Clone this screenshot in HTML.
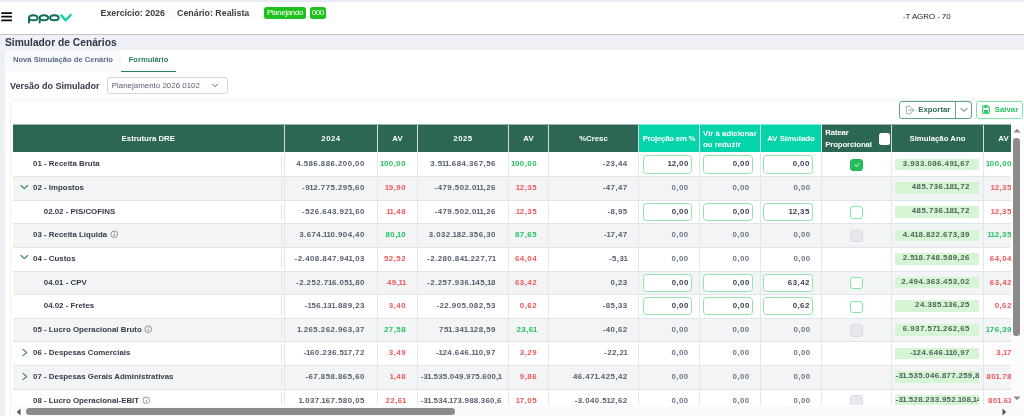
<!DOCTYPE html>
<html><head><meta charset="utf-8"><title>Simulador de Cenários</title>
<style>
*{box-sizing:border-box;margin:0;padding:0}
html,body{width:1024px;height:416px;overflow:hidden;background:#fff;font-family:"Liberation Sans",sans-serif;}
body{position:relative}
.abs{position:absolute}
#topstrip{left:0;top:0;width:1024px;height:2px;background:#ececf6}
#hdr{left:0;top:2px;width:1024px;height:33px;background:#fff;border-bottom:1px solid #c4c4c4;box-shadow:0 1px 2px rgba(0,0,0,.18)}
#band{left:0;top:35px;width:1024px;height:15px;background:#eef0f5}
#lstrip{left:0;top:34.5px;width:5px;height:382px;background:#eef0f5}
#burger div{position:absolute;left:1.2px;width:10.8px;height:1.7px;background:#0a0a0a;border-radius:.6px}
.ht{font-weight:bold;font-size:8.85px;color:#3d3d3d;white-space:nowrap;line-height:12px}
.badge{background:#1ec11e;color:#fff;border-radius:2.5px;font-size:7.9px;line-height:12px;height:12px;text-align:center;white-space:nowrap;letter-spacing:-.35px}
#title{left:5px;top:36px;font-weight:bold;font-size:10.25px;line-height:13px;color:#2f3747;white-space:nowrap}
#tab1{left:5px;top:50px;width:116px;height:21px;background:#f8f9fb;color:#5c6b8a;}
#tab2{left:121px;top:50px;width:55px;height:21.5px;background:#fff;color:#2f7d5c;border-bottom:1px solid #2f7d5c}
.tab{font-weight:bold;font-size:7.6px;line-height:20px;text-align:center;white-space:nowrap}
#vlabel{left:10px;top:79.5px;font-weight:bold;font-size:9.0px;line-height:12px;color:#333b48;white-space:nowrap}
#sel{left:107px;top:76.5px;width:120.5px;height:17px;border:1px solid #ced6e2;border-radius:3px;background:#fff}
#sel span{position:absolute;left:3.7px;top:0.5px;line-height:15px;font-size:7.95px;color:#5a6270;white-space:nowrap}
#card{left:10px;top:100px;width:1020px;height:330px;border:1px solid #f1f2f5;border-radius:3px;background:#fff}
.btn{border:1px solid #5aa08c;border-radius:3px;background:#fff;color:#2f6b57;font-weight:bold;font-size:7.8px;white-space:nowrap}
#tbl{left:12.5px;top:124px;width:1011.5px;height:281px;overflow:hidden}
.h{position:absolute;top:1px;height:27px;color:#fff;font-weight:bold;font-size:7.8px;text-align:center;line-height:27.4px;white-space:nowrap;border-right:1px solid rgba(255,255,255,.78)}
.hbg{position:absolute;top:1px;height:27px}
.h.l{text-align:left;line-height:11.5px;padding:2.5px 0 0 3px}
.rat{position:absolute;left:3.2px;top:2.3px;line-height:11.5px;text-align:left;letter-spacing:-.12px}
.hck{position:absolute;left:56.5px;top:8.3px;width:11px;height:11.5px;background:#fff;border-radius:2.5px}
.r{position:absolute;left:0;width:1011.5px;height:24.62px;box-shadow:inset 0 1px 0 #e1e4e9}
.r.f{box-shadow:none}
.c{position:absolute;top:0;height:24.62px;font-weight:bold;font-size:7.9px;line-height:24.42px;color:#555e6e;white-space:nowrap;border-right:1px solid #e3e6ea;overflow:hidden}
.c.first{color:#333a48;border-right:none}
.c.first:after{content:"";position:absolute;right:2px;top:3px;bottom:3px;width:1px;background:#e3e6ea}
.c.first{border-right:1px solid #e3e6ea}
.lbl{position:absolute;top:0;}
.chev{position:absolute;left:7.6px;top:5.6px;width:10px;height:10px}
.info{display:inline-block;width:8.5px;height:8.5px;vertical-align:-1.5px;margin-left:2.5px}
.num,.av,.pl,.ibox,.sbox{letter-spacing:.45px}
.c i{font-style:normal;margin:0 -.75px}
.num{text-align:right;padding-right:12.2px}
.num.cr{padding-right:10.3px}
.num.ovf{text-align:left;padding:0 0 0 2.6px}
.num.ovf span{display:block;width:84.5px;overflow:hidden;letter-spacing:.22px}
.sbox.ovf{text-align:left;padding:0 0 0 .3px;letter-spacing:.3px}
.av{text-align:right;padding-right:11px}
.av.last{padding-right:11.2px}
.g{color:#22c35d}
.r_{}
.av.r{color:#ef5659}
.pl{text-align:right;padding-right:10.3px;color:#6b7485}
.inp .ibox{position:absolute;left:4px;width:49px;top:3px;height:18.2px;border:1px solid #93e3ad;border-radius:3.5px;background:#fff;text-align:right;padding-right:2.2px;line-height:16px;color:#3a4150;font-size:7.9px}
.ck{position:absolute;left:28.3px;top:6.4px;width:12.6px;height:12.6px;border-radius:3px}
.ck.on{background:#24bd59;border:1px solid #22b354}
.ck.on svg{position:absolute;left:0.3px;top:0.3px;width:10px;height:10px}
.ck.off{background:#fff;border:1px solid #86e3a7}
.ck.dis{background:#e6e8ee;border:1px solid #d9dce3}
.sbox{position:absolute;left:3.2px;right:4.3px;top:6.3px;height:11.6px;background:#d5f5d5;line-height:9.8px;text-align:right;padding-right:8.8px;color:#4e6358;overflow:hidden}
#vs{left:1010.8px;top:124px;width:13px;height:282px;background:#fcfcfc}
#hs{left:12.5px;top:405.5px;width:1011.5px;height:10.5px;background:#fafafa}
#wrap{position:absolute;left:-8px;top:-8px;width:1040px;height:432px;background:#fff;filter:blur(.4px)}
#in{position:absolute;left:8px;top:8px;width:1024px;height:416px}
</style></head><body><div id="wrap"><div id="in">
<div class="abs" id="topstrip"></div>
<div class="abs" id="hdr"></div>
<div class="abs" id="band"></div>
<div class="abs" id="lstrip"></div>
<svg class="abs" style="left:0;top:10px;width:14px;height:14px" viewBox="0 0 14 14"><g fill="#0a0a0a"><rect x="1.2" y="2.3" width="10.8" height="1.75" rx=".5"/><rect x="1.2" y="5.8" width="10.8" height="1.75" rx=".5"/><rect x="1.2" y="9.4" width="10.8" height="1.75" rx=".5"/></g></svg>
<svg class="abs" id="logo" style="left:25px;top:12px;width:50px;height:14px" viewBox="0 0 50 14">
<g fill="none" stroke="#0f6e5a" stroke-width="1.95" stroke-linecap="round">
<ellipse cx="8.3" cy="5.7" rx="4.25" ry="2.55"/><path d="M4 6V10.4"/>
<ellipse cx="18.9" cy="5.7" rx="4.25" ry="2.55"/><path d="M14.7 6.5V10.6"/>
<ellipse cx="29.4" cy="5.7" rx="4.25" ry="2.55"/>
</g>
<path d="M36.3 3.4 L40.6 8.4 L45.6 3" fill="none" stroke="#14d4a9" stroke-width="2.4" stroke-linecap="round" stroke-linejoin="round"/>
</svg>
<div class="abs" style="left:97.5px;top:5px;width:75px;height:15px;background:#fcfcfc;border-radius:2px"></div>
<div class="abs" style="left:174px;top:5px;width:82px;height:15px;background:#fcfcfc;border-radius:2px"></div>
<div class="abs ht" style="left:100.5px;top:6.5px">Exercício: 2026</div>
<div class="abs ht" style="left:177px;top:6.5px">Cenário: Realista</div>
<div class="abs badge" style="left:264px;top:7px;width:42px">Planejando</div>
<div class="abs badge" style="left:309.5px;top:7px;width:16.5px">000</div>
<div class="abs" style="left:903px;top:10.5px;font-size:8px;line-height:12px;color:#222;white-space:nowrap;letter-spacing:-.1px">-T AGRO - 70</div>
<div class="abs" id="title">Simulador de Cenários</div>
<div class="abs" style="left:5px;top:50px;width:1019px;height:366px;background:#fff"></div>
<div class="abs tab" id="tab1">Nova Simulação de Cenário</div>
<div class="abs tab" id="tab2">Formulário</div>
<div class="abs" id="vlabel">Versão do Simulador</div>
<div class="abs" id="sel"><span>Planejamento 2026 0102</span>
<svg style="position:absolute;left:102.5px;top:4.8px;width:8px;height:7px" viewBox="0 0 8 7"><path d="M1.5 2.2 L4 4.8 L6.5 2.2" fill="none" stroke="#555" stroke-width="0.9" stroke-linecap="round" stroke-linejoin="round"/></svg></div>
<div class="abs" id="card"></div>
<div class="abs btn" id="bexp" style="left:899px;top:101px;width:73px;height:18px">
<div style="position:absolute;left:55px;top:0;width:1px;height:16px;background:#6aa896"></div>
<svg style="position:absolute;left:4.5px;top:3px;width:10px;height:10px" viewBox="0 0 10 10"><path d="M6.2 3.2V2.9L4.6 1.3H2.1A.7.7 0 0 0 1.4 2V8A.7.7 0 0 0 2.1 8.7H5.5A.7.7 0 0 0 6.2 8V6.9M3.6 5.1H8.9M7.4 3.6L8.9 5.1L7.4 6.6" fill="none" stroke="#7d9a92" stroke-width=".8" stroke-linecap="round" stroke-linejoin="round"/></svg>
<span style="position:absolute;left:18.3px;top:0;line-height:16.4px">Exportar</span>
<svg style="position:absolute;left:59.5px;top:5px;width:8px;height:6px" viewBox="0 0 8 6"><path d="M1 1.4 L4 4.4 L7 1.4" fill="none" stroke="#2f6b57" stroke-width="1" stroke-linecap="round" stroke-linejoin="round"/></svg>
</div>
<div class="abs btn" id="bsal" style="left:976px;top:101px;width:47px;height:18px;border-color:#80e5a5;color:#22c55e">
<svg style="position:absolute;left:5px;top:2.8px;width:8px;height:9px" viewBox="0 0 8 9"><path d="M1.4 .8H5.6L7.3 2.5V7.6A.7.7 0 0 1 6.6 8.3H1.4A.7.7 0 0 1 .7 7.6V1.5A.7.7 0 0 1 1.4 .8Z" fill="none" stroke="#22c55e" stroke-width="1.1" stroke-linejoin="round"/><rect x="2.2" y=".8" width="3" height="2.1" fill="#22c55e"/><rect x="2.2" y="5" width="3.6" height="3" fill="#22c55e"/></svg>
<span style="position:absolute;left:17.8px;top:0;line-height:16.4px">Salvar</span>
</div>
<div class="abs" id="tbl">
<div style="position:absolute;left:0;top:0;width:1011.5px;height:1px;background:#9bb7ae"></div><div style="position:absolute;left:626.5px;top:0;width:183px;height:1px;background:#86ead5"></div><div class="hbg" style="left:0;width:1011.5px;background:#2c6654"></div><div class="hbg" style="left:626.5px;width:183px;background:#05d3a9"></div>
<div class="h hd" style="left:0.00px;width:272.50px">Estrutura DRE</div><div class="h hd" style="left:272.50px;width:93.00px"><span style="letter-spacing:.5px">2024</span></div><div class="h hd" style="left:365.50px;width:40.00px">AV</div><div class="h hd" style="left:405.50px;width:91.00px"><span style="letter-spacing:.5px">2025</span></div><div class="h hd" style="left:496.50px;width:40.00px">AV</div><div class="h hd" style="left:536.50px;width:90.00px">%Cresc</div><div class="h hb" style="left:626.50px;width:61.00px"><span style="letter-spacing:-.22px">Projeção em %</span></div><div class="h hb l" style="left:687.50px;width:61.00px">Vlr à adicionar<br>ou reduzir</div><div class="h hb" style="left:748.50px;width:61.00px">AV Simulado</div><div class="h hd l" style="left:809.50px;width:70.00px"><span class="rat">Ratear<br>Proporcional</span><span class="hck"></span></div><div class="h hd" style="left:879.50px;width:92.00px">Simulação Ano</div><div class="h hd" style="left:971.50px;width:40.00px">AV</div>
<div class="r f" style="top:28.40px;background:#fff"><div class="c first" style="left:0.00px;width:272.50px;"><span class="lbl" style="left:20.5px">01 - Receita Bruta</span></div><div class="c num" style="left:272.50px;width:93.00px;"><span>4.586.886.200,00</span></div><div class="c av g" style="left:365.50px;width:40.00px;"><span><i>1</i>00,00</span></div><div class="c num" style="left:405.50px;width:91.00px;"><span>3.5<i>1</i><i>1</i>.684.367,56</span></div><div class="c av g" style="left:496.50px;width:40.00px;"><span><i>1</i>00,00</span></div><div class="c num cr" style="left:536.50px;width:90.00px;"><span>-23,44</span></div><div class="c inp" style="left:626.50px;width:61.00px;"><div class="ibox" style="left:4px;width:49px"><i>1</i>2,00</div></div><div class="c inp" style="left:687.50px;width:61.00px;"><div class="ibox" style="left:3px;width:50px">0,00</div></div><div class="c inp" style="left:748.50px;width:61.00px;"><div class="ibox" style="left:2px;width:50px">0,00</div></div><div class="c ckc" style="left:809.50px;width:70.00px;"><div class="ck on"><svg viewBox="0 0 10 10"><path d="M3.1 5.2 L4.4 6.5 L6.9 3.7" fill="none" stroke="#fff" stroke-width="1" stroke-linecap="round" stroke-linejoin="round"/></svg></div></div><div class="c sim" style="left:879.50px;width:92.00px;"><div class="sbox">3.933.086.49<i>1</i>,67</div></div><div class="c av last g" style="left:971.50px;width:40.00px;"><span><i>1</i>00,00</span></div></div>
<div class="r" style="top:52.02px;background:#f3f4f6"><div class="c first" style="left:0.00px;width:272.50px;"><svg class="chev" viewBox="0 0 10 10"><path d="M1.1 3.5 L4.35 6.7 L7.6 3.5" fill="none" stroke="#3f7c6c" stroke-width="1.15" stroke-linecap="round" stroke-linejoin="round"/></svg><span class="lbl" style="left:20.5px">02 - Impostos</span></div><div class="c num" style="left:272.50px;width:93.00px;"><span>-9<i>1</i>2.775.295,60</span></div><div class="c av r" style="left:365.50px;width:40.00px;"><span><i>1</i>9,90</span></div><div class="c num" style="left:405.50px;width:91.00px;"><span>-479.502.0<i>1</i><i>1</i>,26</span></div><div class="c av r" style="left:496.50px;width:40.00px;"><span><i>1</i>2,35</span></div><div class="c num cr" style="left:536.50px;width:90.00px;"><span>-47,47</span></div><div class="c pl" style="left:626.50px;width:61.00px;"><span>0,00</span></div><div class="c pl" style="left:687.50px;width:61.00px;"><span>0,00</span></div><div class="c pl" style="left:748.50px;width:61.00px;"><span>0,00</span></div><div class="c ckc" style="left:809.50px;width:70.00px;"></div><div class="c sim" style="left:879.50px;width:92.00px;"><div class="sbox">485.736.<i>1</i>8<i>1</i>,72</div></div><div class="c av last r" style="left:971.50px;width:40.00px;"><span><i>1</i>2,35</span></div></div>
<div class="r" style="top:75.64px;background:#fff"><div class="c first" style="left:0.00px;width:272.50px;"><span class="lbl" style="left:31.25px">02.02 - PIS/COFINS</span></div><div class="c num" style="left:272.50px;width:93.00px;"><span>-526.643.92<i>1</i>,60</span></div><div class="c av r" style="left:365.50px;width:40.00px;"><span><i>1</i><i>1</i>,48</span></div><div class="c num" style="left:405.50px;width:91.00px;"><span>-479.502.0<i>1</i><i>1</i>,26</span></div><div class="c av r" style="left:496.50px;width:40.00px;"><span><i>1</i>2,35</span></div><div class="c num cr" style="left:536.50px;width:90.00px;"><span>-8,95</span></div><div class="c inp" style="left:626.50px;width:61.00px;"><div class="ibox" style="left:4px;width:49px">0,00</div></div><div class="c inp" style="left:687.50px;width:61.00px;"><div class="ibox" style="left:3px;width:50px">0,00</div></div><div class="c inp" style="left:748.50px;width:61.00px;"><div class="ibox" style="left:2px;width:50px"><i>1</i>2,35</div></div><div class="c ckc" style="left:809.50px;width:70.00px;"><div class="ck off"></div></div><div class="c sim" style="left:879.50px;width:92.00px;"><div class="sbox">485.736.<i>1</i>8<i>1</i>,72</div></div><div class="c av last r" style="left:971.50px;width:40.00px;"><span><i>1</i>2,35</span></div></div>
<div class="r" style="top:99.26px;background:#f3f4f6"><div class="c first" style="left:0.00px;width:272.50px;"><span class="lbl" style="left:20.5px">03 - Receita Líquida<svg class="info" viewBox="0 0 10 10"><circle cx="5" cy="5" r="3.9" fill="none" stroke="#555" stroke-width="0.7"/><path d="M5 4.3V7.2M5 2.8V3.4" stroke="#555" stroke-width="0.8" fill="none"/></svg></span></div><div class="c num" style="left:272.50px;width:93.00px;"><span>3.674.<i>1</i><i>1</i>0.904,40</span></div><div class="c av g" style="left:365.50px;width:40.00px;"><span>80,<i>1</i>0</span></div><div class="c num" style="left:405.50px;width:91.00px;"><span>3.032.<i>1</i>82.356,30</span></div><div class="c av g" style="left:496.50px;width:40.00px;"><span>87,65</span></div><div class="c num cr" style="left:536.50px;width:90.00px;"><span>-<i>1</i>7,47</span></div><div class="c pl" style="left:626.50px;width:61.00px;"><span>0,00</span></div><div class="c pl" style="left:687.50px;width:61.00px;"><span>0,00</span></div><div class="c pl" style="left:748.50px;width:61.00px;"><span>0,00</span></div><div class="c ckc" style="left:809.50px;width:70.00px;"><div class="ck dis"></div></div><div class="c sim" style="left:879.50px;width:92.00px;"><div class="sbox">4.4<i>1</i>8.822.673,39</div></div><div class="c av last g" style="left:971.50px;width:40.00px;"><span><i>1</i><i>1</i>2,35</span></div></div>
<div class="r" style="top:122.88px;background:#fff"><div class="c first" style="left:0.00px;width:272.50px;"><svg class="chev" viewBox="0 0 10 10"><path d="M1.1 3.5 L4.35 6.7 L7.6 3.5" fill="none" stroke="#3f7c6c" stroke-width="1.15" stroke-linecap="round" stroke-linejoin="round"/></svg><span class="lbl" style="left:20.5px">04 - Custos</span></div><div class="c num" style="left:272.50px;width:93.00px;"><span>-2.408.847.94<i>1</i>,03</span></div><div class="c av r" style="left:365.50px;width:40.00px;"><span>52,52</span></div><div class="c num" style="left:405.50px;width:91.00px;"><span>-2.280.84<i>1</i>.227,7<i>1</i></span></div><div class="c av r" style="left:496.50px;width:40.00px;"><span>64,04</span></div><div class="c num cr" style="left:536.50px;width:90.00px;"><span>-5,3<i>1</i></span></div><div class="c pl" style="left:626.50px;width:61.00px;"><span>0,00</span></div><div class="c pl" style="left:687.50px;width:61.00px;"><span>0,00</span></div><div class="c pl" style="left:748.50px;width:61.00px;"><span>0,00</span></div><div class="c ckc" style="left:809.50px;width:70.00px;"></div><div class="c sim" style="left:879.50px;width:92.00px;"><div class="sbox">2.5<i>1</i>8.748.589,26</div></div><div class="c av last r" style="left:971.50px;width:40.00px;"><span>64,04</span></div></div>
<div class="r" style="top:146.50px;background:#f3f4f6"><div class="c first" style="left:0.00px;width:272.50px;"><span class="lbl" style="left:31.25px">04.01 - CPV</span></div><div class="c num" style="left:272.50px;width:93.00px;"><span>-2.252.7<i>1</i>6.05<i>1</i>,80</span></div><div class="c av r" style="left:365.50px;width:40.00px;"><span>49,<i>1</i><i>1</i></span></div><div class="c num" style="left:405.50px;width:91.00px;"><span>-2.257.936.<i>1</i>45,<i>1</i>8</span></div><div class="c av r" style="left:496.50px;width:40.00px;"><span>63,42</span></div><div class="c num cr" style="left:536.50px;width:90.00px;"><span>0,23</span></div><div class="c inp" style="left:626.50px;width:61.00px;"><div class="ibox" style="left:4px;width:49px">0,00</div></div><div class="c inp" style="left:687.50px;width:61.00px;"><div class="ibox" style="left:3px;width:50px">0,00</div></div><div class="c inp" style="left:748.50px;width:61.00px;"><div class="ibox" style="left:2px;width:50px">63,42</div></div><div class="c ckc" style="left:809.50px;width:70.00px;"><div class="ck off"></div></div><div class="c sim" style="left:879.50px;width:92.00px;"><div class="sbox">2.494.363.453,02</div></div><div class="c av last r" style="left:971.50px;width:40.00px;"><span>63,42</span></div></div>
<div class="r" style="top:170.12px;background:#fff"><div class="c first" style="left:0.00px;width:272.50px;"><span class="lbl" style="left:31.25px">04.02 - Fretes</span></div><div class="c num" style="left:272.50px;width:93.00px;"><span>-<i>1</i>56.<i>1</i>3<i>1</i>.889,23</span></div><div class="c av r" style="left:365.50px;width:40.00px;"><span>3,40</span></div><div class="c num" style="left:405.50px;width:91.00px;"><span>-22.905.082,53</span></div><div class="c av r" style="left:496.50px;width:40.00px;"><span>0,62</span></div><div class="c num cr" style="left:536.50px;width:90.00px;"><span>-85,33</span></div><div class="c inp" style="left:626.50px;width:61.00px;"><div class="ibox" style="left:4px;width:49px">0,00</div></div><div class="c inp" style="left:687.50px;width:61.00px;"><div class="ibox" style="left:3px;width:50px">0,00</div></div><div class="c inp" style="left:748.50px;width:61.00px;"><div class="ibox" style="left:2px;width:50px">0,62</div></div><div class="c ckc" style="left:809.50px;width:70.00px;"><div class="ck off"></div></div><div class="c sim" style="left:879.50px;width:92.00px;"><div class="sbox">24.385.<i>1</i>36,25</div></div><div class="c av last r" style="left:971.50px;width:40.00px;"><span>0,62</span></div></div>
<div class="r" style="top:193.74px;background:#f3f4f6"><div class="c first" style="left:0.00px;width:272.50px;"><span class="lbl" style="left:20.5px">05 - Lucro Operacional Bruto<svg class="info" viewBox="0 0 10 10"><circle cx="5" cy="5" r="3.9" fill="none" stroke="#555" stroke-width="0.7"/><path d="M5 4.3V7.2M5 2.8V3.4" stroke="#555" stroke-width="0.8" fill="none"/></svg></span></div><div class="c num" style="left:272.50px;width:93.00px;"><span><i>1</i>.265.262.963,37</span></div><div class="c av g" style="left:365.50px;width:40.00px;"><span>27,58</span></div><div class="c num" style="left:405.50px;width:91.00px;"><span>75<i>1</i>.34<i>1</i>.<i>1</i>28,59</span></div><div class="c av g" style="left:496.50px;width:40.00px;"><span>23,6<i>1</i></span></div><div class="c num cr" style="left:536.50px;width:90.00px;"><span>-40,62</span></div><div class="c pl" style="left:626.50px;width:61.00px;"><span>0,00</span></div><div class="c pl" style="left:687.50px;width:61.00px;"><span>0,00</span></div><div class="c pl" style="left:748.50px;width:61.00px;"><span>0,00</span></div><div class="c ckc" style="left:809.50px;width:70.00px;"><div class="ck dis"></div></div><div class="c sim" style="left:879.50px;width:92.00px;"><div class="sbox">6.937.57<i>1</i>.262,65</div></div><div class="c av last g" style="left:971.50px;width:40.00px;"><span><i>1</i>76,39</span></div></div>
<div class="r" style="top:217.36px;background:#fff"><div class="c first" style="left:0.00px;width:272.50px;"><svg class="chev" viewBox="0 0 10 10"><path d="M3 2.4 L6.6 5.5 L3 8.6" fill="none" stroke="#3f7c6c" stroke-width="1.15" stroke-linecap="round" stroke-linejoin="round"/></svg><span class="lbl" style="left:20.5px">06 - Despesas Comerciais</span></div><div class="c num" style="left:272.50px;width:93.00px;"><span>-<i>1</i>60.236.5<i>1</i>7,72</span></div><div class="c av r" style="left:365.50px;width:40.00px;"><span>3,49</span></div><div class="c num" style="left:405.50px;width:91.00px;"><span>-<i>1</i>24.646.<i>1</i><i>1</i>0,97</span></div><div class="c av r" style="left:496.50px;width:40.00px;"><span>3,29</span></div><div class="c num cr" style="left:536.50px;width:90.00px;"><span>-22,2<i>1</i></span></div><div class="c pl" style="left:626.50px;width:61.00px;"><span>0,00</span></div><div class="c pl" style="left:687.50px;width:61.00px;"><span>0,00</span></div><div class="c pl" style="left:748.50px;width:61.00px;"><span>0,00</span></div><div class="c ckc" style="left:809.50px;width:70.00px;"></div><div class="c sim" style="left:879.50px;width:92.00px;"><div class="sbox">-<i>1</i>24.646.<i>1</i><i>1</i>0,97</div></div><div class="c av last r" style="left:971.50px;width:40.00px;"><span>3,<i>1</i>7</span></div></div>
<div class="r" style="top:240.98px;background:#f3f4f6"><div class="c first" style="left:0.00px;width:272.50px;"><svg class="chev" viewBox="0 0 10 10"><path d="M3 2.4 L6.6 5.5 L3 8.6" fill="none" stroke="#3f7c6c" stroke-width="1.15" stroke-linecap="round" stroke-linejoin="round"/></svg><span class="lbl" style="left:20.5px">07 - Despesas Gerais Administrativas</span></div><div class="c num" style="left:272.50px;width:93.00px;"><span>-67.858.865,60</span></div><div class="c av r" style="left:365.50px;width:40.00px;"><span><i>1</i>,48</span></div><div class="c num ovf" style="left:405.50px;width:91.00px;"><span>-3<i>1</i>.535.049.975.600,<i>1</i></span></div><div class="c av r" style="left:496.50px;width:40.00px;"><span>9,86</span></div><div class="c num cr" style="left:536.50px;width:90.00px;"><span>46.47<i>1</i>.425,42</span></div><div class="c pl" style="left:626.50px;width:61.00px;"><span>0,00</span></div><div class="c pl" style="left:687.50px;width:61.00px;"><span>0,00</span></div><div class="c pl" style="left:748.50px;width:61.00px;"><span>0,00</span></div><div class="c ckc" style="left:809.50px;width:70.00px;"></div><div class="c sim" style="left:879.50px;width:92.00px;"><div class="sbox ovf">-3<i>1</i>.535.046.877.259,8</div></div><div class="c av last r" style="left:971.50px;width:40.00px;"><span>80<i>1</i>.78</span></div></div>
<div class="r" style="top:264.60px;background:#fff"><div class="c first" style="left:0.00px;width:272.50px;"><span class="lbl" style="left:20.5px">08 - Lucro Operacional-EBIT<svg class="info" viewBox="0 0 10 10"><circle cx="5" cy="5" r="3.9" fill="none" stroke="#555" stroke-width="0.7"/><path d="M5 4.3V7.2M5 2.8V3.4" stroke="#555" stroke-width="0.8" fill="none"/></svg></span></div><div class="c num" style="left:272.50px;width:93.00px;"><span><i>1</i>.037.<i>1</i>67.580,05</span></div><div class="c av r" style="left:365.50px;width:40.00px;"><span>22,6<i>1</i></span></div><div class="c num ovf" style="left:405.50px;width:91.00px;"><span>-3<i>1</i>.534.<i>1</i>73.988.360,6</span></div><div class="c av r" style="left:496.50px;width:40.00px;"><span><i>1</i>7,05</span></div><div class="c num cr" style="left:536.50px;width:90.00px;"><span>-3.040.5<i>1</i>2,62</span></div><div class="c pl" style="left:626.50px;width:61.00px;"><span>0,00</span></div><div class="c pl" style="left:687.50px;width:61.00px;"><span>0,00</span></div><div class="c pl" style="left:748.50px;width:61.00px;"><span>0,00</span></div><div class="c ckc" style="left:809.50px;width:70.00px;"><div class="ck dis"></div></div><div class="c sim" style="left:879.50px;width:92.00px;"><div class="sbox ovf">-3<i>1</i>.528.233.952.<i>1</i>08,<i>1</i>4</div></div><div class="c av last r" style="left:971.50px;width:40.00px;"><span>80<i>1</i>.6<i>1</i></span></div></div>
</div>
<div class="abs" id="vs">
<svg style="position:absolute;left:2px;top:4px;width:8px;height:5px" viewBox="0 0 8 5"><path d="M0.5 4.5 L4 0.8 L7.5 4.5Z" fill="#8a8a8a"/></svg>
<div style="position:absolute;left:2.5px;top:14px;width:6.5px;height:198px;border-radius:3.3px;background:#8b8b8b"></div>
<svg style="position:absolute;left:2px;top:272px;width:8px;height:5px" viewBox="0 0 8 5"><path d="M0.5 0.5 L4 4.2 L7.5 0.5Z" fill="#8a8a8a"/></svg>
</div>
<div class="abs" id="hs">
<svg style="position:absolute;left:3.5px;top:2.5px;width:5px;height:8px" viewBox="0 0 5 8"><path d="M4.5 0.5 L0.8 4 L4.5 7.5Z" fill="#555"/></svg>
<div style="position:absolute;left:13.5px;top:2.7px;width:428.5px;height:6.6px;border-radius:3.3px;background:#8b8b8b"></div>
<svg style="position:absolute;left:989.5px;top:2.5px;width:5px;height:8px" viewBox="0 0 5 8"><path d="M0.5 0.5 L4.2 4 L0.5 7.5Z" fill="#555"/></svg>
</div>
</div></div></body></html>
